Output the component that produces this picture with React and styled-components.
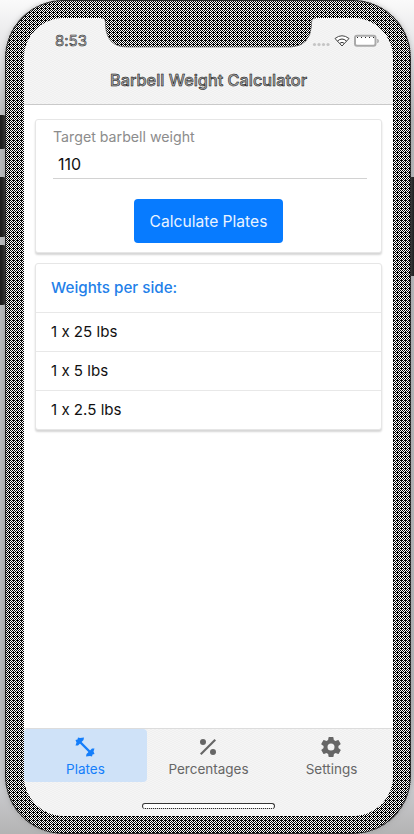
import React from 'react';
import styled, { createGlobalStyle } from 'styled-components';

const Global = createGlobalStyle`
  * { box-sizing: border-box; }
  html, body { margin: 0; width: 414px; height: 834px; overflow: hidden; }
  body { font-family: Inter, "Liberation Sans", sans-serif; font-feature-settings: "calt" 0; color: #111; }
`;
const checker = `conic-gradient(from 270deg at 1px 1px, #000 90deg, transparent 0) 0 0 / 4px 4px,
  repeating-conic-gradient(#000 0 25%, #fff 0 50%) 0 0 / 2px 2px`;
const barTexture = 'repeating-conic-gradient(#f0f0f0 0 25%, #f5f5f5 0 50%) 0 0 / 4px 2px';

const Stage = styled.div`
  position: relative;
  width: 414px;
  height: 834px;
  padding: 0 3px 0 5px;
  background: linear-gradient(#fafafa 0, #e6e6e8 45px, #b8babd 120px, #b5b7ba 700px, #c9cacd 790px, #b4b4b4 834px);
`;
const SideKey = styled.div`
  position: absolute;
  left: ${p => p.$x}px;
  top: ${p => p.$y}px;
  width: 6px;
  height: ${p => p.$h}px;
  border-radius: ${p => (p.$x ? 0 : '0 3px 3px 0')};
  background: #1c1c1c;
`;
const Phone = styled.div`
  position: relative;
  height: 834px;
  padding: 18px 18px 18px 19px;
  border-radius: 58px;
  background: ${checker};
  box-shadow: inset 0 0 1px 1px #222, 0 0 5px #8888;
`;
const Screen = styled.main`
  height: 798px;
  display: flex;
  flex-direction: column;
  border-radius: 40px;
  overflow: hidden;
  background: #fff;
`;
const Header = styled.header`
  height: 87px;
  flex: none;
  background: ${barTexture};
  border-bottom: 1px solid #c9c9c9;
`;
const StatusBar = styled.div`
  height: 45px;
  padding: 0 13px 0 31px;
  display: flex;
  justify-content: space-between;
  align-items: center;
`;
const Time = styled.time`
  font-size: 15px;
  font-weight: 400;
  color: #bbb;
  -webkit-text-stroke: 0.5px #222;
`;
const StatusIcons = styled.svg`
  width: 68px;
  height: 16px;
`;
const Notch = styled.svg`
  position: absolute;
  left: 93px;
  top: 17px;
  width: 220px;
  height: 31px;
`;
const Title = styled.h1`
  margin: 0;
  height: 35px;
  line-height: 35px;
  text-align: center;
  font-size: 16.3px;
  font-weight: 500;
  color: #aaa;
  -webkit-text-stroke: 0.5px #000;
`;
const Content = styled.section`
  flex: 1;
  padding: 14px 11px 0 11px;
  display: flex;
  flex-direction: column;
  gap: 10px;
`;
const Card = styled.section`
  border: 1px solid #e6e6e6;
  border-radius: 3px;
  box-shadow: 0 2px 2px #d6d6d6;
  background: #fff;
`;
const FormCard = styled(Card)`
  height: 134px;
  padding: 7px 14px 0 17px;
  display: flex;
  flex-direction: column;
`;
const Label = styled.label`
  font-size: 14.2px;
  line-height: 20px;
  color: #8c8c8c;
`;
const Input = styled.div`
  height: 32px;
  padding: 3px 5px 0;
  line-height: 29px;
  font-size: 16px;
  border-bottom: 1px solid #d2d2d2;
`;
const Button = styled.button`
  width: 149px;
  height: 44px;
  margin: 20px 0 0 81px;
  padding: 0;
  border: 0;
  border-radius: 4px;
  background: #077bff;
  color: #eaf3ff;
  font: 400 15.6px Inter, sans-serif;
`;
const ListTitle = styled.h2`
  margin: 0;
  height: 48px;
  padding-left: 15px;
  line-height: 48px;
  font-size: 15.2px;
  font-weight: 500;
  color: #237fe9;
`;
const Row = styled.div`
  height: 39px;
  padding-left: 15px;
  line-height: 38px;
  font-size: 15.1px;
  border-top: 1px solid #e8e8e8;
`;
const Tabs = styled.nav`
  height: 88px;
  display: grid;
  grid-template-columns: repeat(3, 1fr);
  align-items: start;
  position: relative;
  background: ${barTexture};
  border-top: 1px solid #dcdcdc;
`;
const Tab = styled.div`
  height: 53px;
  padding-top: 8px;
  display: flex;
  flex-direction: column;
  align-items: center;
  border-radius: 4px;
  background: ${p => (p.$active ? '#cfe2f8' : 'transparent')};
  color: ${p => (p.$active ? '#147efb' : '#666')};
  font-size: 13.5px;
  line-height: 20px;
  svg { width: 22px; height: 22px; flex: none; fill: currentColor; margin: -1px 0 1px -1px; }
`;
const HomeBar = styled.div`
  position: absolute;
  left: 118px;
  top: 74px;
  width: 133px;
  height: 6px;
  border: 1px solid #333;
  border-bottom: 1px dotted #000;
  border-radius: 3px;
  background: #fff;
`;

export default function App() {
  return (
    <>
      <Global />
      <Stage>
        <SideKey $x={0} $y={115} $h={34} />
        <SideKey $x={0} $y={177} $h={60} />
        <SideKey $x={0} $y={245} $h={60} />
        <SideKey $x={409} $y={177} $h={99} />
        <Phone>
          <Screen>
            <Header>
              <StatusBar>
                <Time>8:53</Time>
                <StatusIcons viewBox="0 0 68 16">
                  <g fill="#c5c5c5">
                    <circle cx="2.5" cy="11.5" r="1.6" /><circle cx="7" cy="11.5" r="1.6" />
                    <circle cx="11.5" cy="11.5" r="1.6" /><circle cx="16" cy="11.5" r="1.6" />
                  </g>
                  <path d="M23 5.5Q30 0 37 5.5L30 13Z" fill="#fff" stroke="#444" />
                  <path d="M25.5 8Q30 4 34.5 8M28 10.2Q30 8.500 32 10.2" fill="none" stroke="#333" />
                  <rect x="43" y="2.8" width="20.5" height="10" rx="2" fill="#fff" stroke="#aaa" strokeWidth="2" />
                  <path d="M45 4.5H62" stroke="#222" strokeDasharray="1 3" />
                  <path d="M65.5 6q2.5 2 0 4Z" fill="#aaa" stroke="#aaa" strokeWidth=".6" />
                </StatusIcons>
              </StatusBar>
              <Title>Barbell Weight Calculator</Title>
            </Header>
            <Content>
              <FormCard>
                <Label>Target barbell weight</Label>
                <Input>110</Input>
                <Button>Calculate Plates</Button>
              </FormCard>
              <Card>
                <ListTitle>Weights per side:</ListTitle>
                <Row>1 x 25 lbs</Row>
                <Row>1 x 5 lbs</Row>
                <Row>1 x 2.5 lbs</Row>
              </Card>
            </Content>
            <Tabs>
              <Tab $active>
                <svg viewBox="0 0 22 22">
                  <path d="M6 6L16 16" stroke="currentColor" strokeWidth="2.4" />
                  <path d="M1.500 4L3.500 3.500L4 1.500L6 2L10 1.500L9.500 4L4 9.500L1.500 9.500L2.500 6.500ZM20.500 18L18.500 18.500L18 20.500L16 20L12 20.500L12.500 18L18 12.500L20.500 12.500L19.500 15.500Z" />
                </svg>
                Plates
              </Tab>
              <Tab>
                <svg viewBox="0 0 22 22">
                  <circle cx="6" cy="6" r="3" /><circle cx="16" cy="16" r="3" />
                  <path d="M17.5 3L19 4.5L4.5 19L3 17.5Z" />
                </svg>
                Percentages
              </Tab>
              <Tab>
                <svg viewBox="1 1 22 22">
                  <path d="M19.4 13c.04-.3.06-.65.06-1s-.02-.7-.06-1l2.1-1.65a.5.5 0 0 0 .12-.64l-2-3.46a.5.5 0 0 0-.6-.22l-2.5 1a7.3 7.3 0 0 0-1.7-1l-.38-2.65A.5.5 0 0 0 14 2h-4a.5.5 0 0 0-.5.42L9.12 5.1c-.6.24-1.17.57-1.7.98l-2.48-1a.5.5 0 0 0-.6.22l-2 3.46a.5.5 0 0 0 .12.64L4.6 11a8 8 0 0 0 0 2l-2.1 1.65a.5.5 0 0 0-.12.64l2 3.46c.12.22.38.3.6.22l2.5-1c.52.4 1.08.73 1.7.98l.37 2.65c.04.24.25.42.5.42h4c.25 0 .46-.18.5-.42l.38-2.65c.6-.25 1.17-.58 1.7-.98l2.48 1c.23.08.48 0 .6-.22l2-3.46a.5.5 0 0 0-.12-.64ZM12 15.5a3.5 3.5 0 1 1 0-7 3.5 3.5 0 0 1 0 7Z" />
                </svg>
                Settings
              </Tab>
              <HomeBar />
            </Tabs>
          </Screen>
          <Notch viewBox="0 0 220 31">
            <defs>
              <pattern id="mesh" width="4" height="4" patternUnits="userSpaceOnUse" x="-1" y="-1">
                <rect width="4" height="4" fill="#fff" />
                <path d="M0 0h2v1H0ZM3 0h1v1H3ZM0 1h1v1H0ZM2 1h1v1H2ZM1 2h1v1H1ZM3 2h1v1H3ZM0 3h1v1H0ZM2 3h1v1H2Z" fill="#000" shapeRendering="crispEdges" />
              </pattern>
            </defs>
            <path d="M0 1H3Q7.500 1 7.500 6V9Q9 30 29 30H193Q212 29 213.500 9V6Q213.500 1 218 1H220V0H0Z" fill="url(#mesh)" />
            <path d="M3 1Q7.500 1 7.500 6V9Q9 30 29 30H193Q212 29 213.500 9V6Q213.500 1 218 1" fill="none" stroke="#555" strokeWidth=".6" />
          </Notch>
        </Phone>
      </Stage>
    </>
  );
}
